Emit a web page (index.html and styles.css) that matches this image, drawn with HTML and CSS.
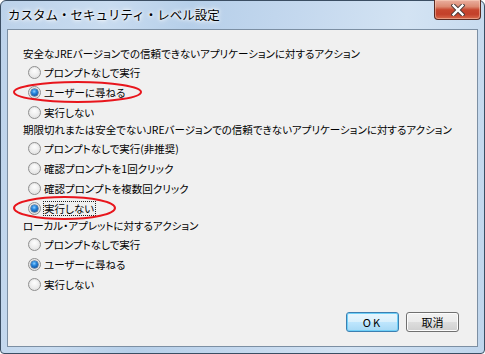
FILE: index.html
```html
<!DOCTYPE html>
<html lang="ja">
<head>
<meta charset="utf-8">
<link rel="stylesheet" href="styles.css">
</head>
<body>
<div class="window">
  <div class="titlebar">
    <span class="title">カスタム・セキュリティ・レベル設定</span>
    <span class="close">
      <svg width="14" height="12" viewBox="0 0 14 12"><path d="M2.5 1.5 L11.5 10.5 M11.5 1.5 L2.5 10.5" fill="none" stroke="#4a3a38" stroke-width="4.2" stroke-linecap="square"/><path d="M2.5 1.5 L11.5 10.5 M11.5 1.5 L2.5 10.5" fill="none" stroke="#fff" stroke-width="2.4" stroke-linecap="square"/></svg>
    </span>
  </div>
  <div class="client">
    <div class="content">
      <div class="head">安全なJREバージョンでの信頼できないアプリケーションに対するアクション</div>
      <div class="row"><span class="radio"></span>プロンプトなしで実行</div>
      <div class="row"><span class="radio on"></span>ユーザーに尋ねる<svg class="ring ring1" viewBox="0 0 129 22"><ellipse cx="64.5" cy="11" rx="63.5" ry="10" fill="none" stroke="#e8151c" stroke-width="2"/></svg></div>
      <div class="row"><span class="radio"></span>実行しない</div>
      <div class="head">期限切れまたは安全でないJREバージョンでの信頼できないアプリケーションに対するアクション</div>
      <div class="row"><span class="radio"></span>プロンプトなしで実行(非推奨)</div>
      <div class="row"><span class="radio"></span>確認プロンプトを1回クリック</div>
      <div class="row"><span class="radio"></span>確認プロンプトを複数回クリック</div>
      <div class="row"><span class="radio on"></span><span class="focus">実行しない</span><svg class="ring ring2" viewBox="0 0 103 24"><ellipse cx="51.5" cy="12" rx="50.5" ry="11" fill="none" stroke="#e8151c" stroke-width="2"/></svg></div>
      <div class="head">ローカル・アプレットに対するアクション</div>
      <div class="row"><span class="radio"></span>プロンプトなしで実行</div>
      <div class="row"><span class="radio on"></span>ユーザーに尋ねる</div>
      <div class="row"><span class="radio"></span>実行しない</div>
    </div>
    <div class="buttons">
      <button class="btn default">OK</button>
      <button class="btn">取消</button>
    </div>
  </div>
</div>
</body>
</html>
```

FILE: styles.css
```css
html, body {
  margin: 0;
  padding: 0;
  width: 485px;
  height: 354px;
  overflow: hidden;
  background: #ffffff;
}

.window {
  box-sizing: border-box;
  width: 485px;
  height: 354px;
  border: 1px solid #3b4e63;
  border-radius: 6px 6px 4px 4px;
  padding: 0 6px 6px 6px;
  display: flex;
  flex-direction: column;
  background: linear-gradient(100deg, #bcd2ea 0%, #c9dcf0 20%, #b6cfe9 35%, #c4d8ee 55%, #d3e3f3 75%, #bfd5ec 100%);
  font-family: "Noto Sans CJK JP", sans-serif;
}

.titlebar {
  height: 28px;
  display: flex;
  align-items: flex-start;
  padding-left: 1px;
}

.title {
  font-size: 12.5px;
  line-height: 16px;
  padding-top: 6px;
  color: #000;
  text-shadow: 0 0 6px #fff, 0 0 4px #fff, 0 0 2px #fff;
}

.close {
  margin-left: auto;
  margin-right: -3px;
  margin-top: -1px;
  width: 47px;
  height: 20px;
  box-sizing: border-box;
  border: 1px solid #5a2a22;
  border-top: none;
  border-radius: 0 0 4px 4px;
  background: linear-gradient(#eab0a0 0%, #dc8a72 35%, #c7462e 52%, #c3402a 75%, #d86a4c 100%);
  box-shadow: inset 0 0 0 1px rgba(255, 220, 200, 0.45);
  display: flex;
  align-items: center;
  justify-content: center;
}

.client {
  flex: 1;
  border: 1px solid #7c8fa3;
  background: #f0f0f0;
  display: flex;
  flex-direction: column;
  padding: 16px 18px 14px 15px;
}

.content {
  display: flex;
  flex-direction: column;
  font-size: 10.5px;
  color: #000;
  font-feature-settings: "palt";
}

.head {
  height: 16px;
  line-height: 16px;
  white-space: nowrap;
}

.row {
  position: relative;
  height: 20px;
  display: flex;
  align-items: center;
  padding-left: 5px;
  white-space: nowrap;
}

.radio {
  box-sizing: border-box;
  width: 13px;
  height: 13px;
  border-radius: 50%;
  border: 1px solid #8f8f8f;
  background: radial-gradient(circle at 50% 35%, #fdfdfd 0%, #ececec 55%, #d6d6d6 100%);
  box-shadow: inset 0 0 0 1px #e6e6e6;
  margin-right: 3px;
  display: flex;
  align-items: center;
  justify-content: center;
  flex: none;
}

.radio.on::after {
  content: "";
  width: 7px;
  height: 7px;
  border-radius: 50%;
  background: radial-gradient(circle at 45% 35%, #8fd0ff 0%, #2a8ae0 35%, #0d4f9e 80%, #083a78 100%);
  box-shadow: 0 0 0 0.5px #123d6e;
}

.focus {
  border: 1px dotted #222;
  margin-left: -1px;
  padding: 0 1px 0 0;
  line-height: 13px;
}

.ring {
  position: absolute;
  top: -1px;
  left: -10px;
  height: 22px;
  pointer-events: none;
}

.ring1 { width: 129px; }
.ring2 { width: 103px; top: -2px; height: 24px; }

.buttons {
  margin-top: auto;
  display: flex;
  justify-content: flex-end;
  gap: 7px;
}

.btn {
  box-sizing: border-box;
  width: 53px;
  height: 20px;
  padding: 0;
  font-family: "Noto Sans CJK JP", sans-serif;
  font-size: 11px;
  line-height: 18px;
  color: #000;
  border: 1px solid #707070;
  border-radius: 3px;
  background: linear-gradient(#f2f2f2 0%, #ebebeb 48%, #dddddd 52%, #cfcfcf 100%);
  box-shadow: inset 0 0 0 1px #fcfcfc;
}

.btn.default {
  border-color: #3c7fb1;
  background: linear-gradient(#eaf6fd 0%, #d9f0fc 48%, #bee6fd 52%, #a7d9f5 100%);
  box-shadow: inset 0 0 0 1px #6fd0f8;
  letter-spacing: 2px;
}
```
